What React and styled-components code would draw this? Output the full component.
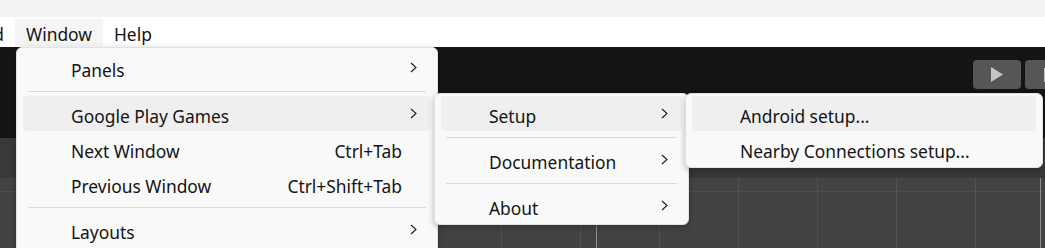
import React from "react";
import styled, { createGlobalStyle } from "styled-components";

const GlobalStyle = createGlobalStyle`
  html, body {
    margin: 0;
    padding: 0;
    background: #f3f3f3;
    overflow: hidden;
  }
  body {
    font-family: "Noto Sans", "Open Sans", sans-serif;
    font-size: 17.4px;
    color: #141414;
  }
`;

const Page = styled.div`
  position: relative;
  width: 1045px;
  height: 248px;
  overflow: hidden;
  display: flex;
  flex-direction: column;
`;

const TitleStrip = styled.div`
  height: 17px;
  background: #f3f3f3;
`;

const MenuBar = styled.div`
  height: 30px;
  background: #ffffff;
  display: flex;
  align-items: flex-start;
  padding-top: 2px;
  box-sizing: border-box;
`;

const LeadingClip = styled.div`
  width: 15px;
  display: flex;
  justify-content: flex-end;
  overflow: hidden;
`;

const BarItem = styled.div`
  height: 27px;
  line-height: 30px;
  padding: 0 11px;
  white-space: nowrap;
  flex-shrink: 0;
  background: ${(p) => (p.open ? "#f5f5f5" : "transparent")};
`;

const Workspace = styled.div`
  flex: 1;
  display: flex;
  flex-direction: column;
`;

const PlayBar = styled.div`
  height: 91px;
  background: #141414;
  display: flex;
  justify-content: flex-end;
  align-items: flex-start;
  padding-top: 13px;
  box-sizing: border-box;
`;

const PlayGroup = styled.div`
  display: flex;
  gap: 4px;
  margin-right: -80px;
`;

const PlayButton = styled.div`
  width: 48px;
  height: 29px;
  border-radius: 4px;
  background: #565656;
  display: flex;
  align-items: center;
  justify-content: center;
`;

const SceneToolbar = styled.div`
  height: 40px;
  background: #393939;
`;

const SceneView = styled.div`
  flex: 1;
  background-color: #434343;
  background-image:
    linear-gradient(#8c8c8c, #8c8c8c),
    linear-gradient(#8c8c8c, #8c8c8c),
    linear-gradient(to right, #525252 1px, transparent 1px),
    linear-gradient(to bottom, #4d4d4d 1px, transparent 1px);
  background-size: 1px 100%, 1px 100%, 79px 100%, 100% 79px;
  background-position: 596px 0, 1040px 0, 27px 0, 0 13px;
  background-repeat: no-repeat, no-repeat, repeat-x, repeat-y;
`;

const Menu = styled.div`
  position: absolute;
  left: ${(p) => p.left}px;
  top: ${(p) => p.top}px;
  width: ${(p) => p.width}px;
  box-sizing: border-box;
  background: #f9f9f9;
  border: 1px solid #e2e2e2;
  border-radius: 6px;
  padding: 2px 0 1px;
  box-shadow: 0 2px 6px rgba(0, 0, 0, 0.28);
  z-index: ${(p) => p.layer};
`;

const Row = styled.div`
  height: 35px;
  margin: 0 ${(p) => p.inset}px;
  padding: 0 14px 0 48px;
  border-radius: 4px;
  display: grid;
  grid-template-columns: 1fr auto 15px;
  align-items: center;
  background: ${(p) => (p.active ? "#efefef" : "transparent")};
  white-space: nowrap;
`;

const Label = styled.span`
  line-height: 30px;
  padding-top: 5px;
`;

const Shortcut = styled.span`
  line-height: 30px;
  padding-top: 5px;
  text-align: right;
`;

const ArrowSlot = styled.span`
  display: flex;
  justify-content: flex-end;
  align-items: center;
`;

const Separator = styled.div`
  height: 1px;
  background: #dadada;
  margin: 6px 11px 4px;
`;

const Chevron = () => (
  <svg width="7" height="11" viewBox="0 0 7 11">
    <polyline
      points="1,1 6,5.5 1,10"
      fill="none"
      stroke="#1a1a1a"
      strokeWidth="1.1"
    />
  </svg>
);

const windowMenu = [
  { label: "Panels", sub: true },
  { sep: true },
  { label: "Google Play Games", sub: true, active: true },
  { label: "Next Window", keys: "Ctrl+Tab" },
  { label: "Previous Window", keys: "Ctrl+Shift+Tab" },
  { sep: true },
  { label: "Layouts", sub: true },
  { label: "Search", sub: true },
  { sep: true },
  { label: "Asset Store" },
];

const playGamesMenu = [
  { label: "Setup", sub: true, active: true },
  { sep: true },
  { label: "Documentation", sub: true },
  { sep: true },
  { label: "About", sub: true },
];

const setupMenu = [
  { label: "Android setup...", active: true },
  { label: "Nearby Connections setup..." },
];

const MenuItems = ({ items, inset }) =>
  items.map((item, i) =>
    item.sep ? (
      <Separator key={i} />
    ) : (
      <Row key={i} inset={inset} active={item.active}>
        <Label>{item.label}</Label>
        <Shortcut>{item.keys}</Shortcut>
        <ArrowSlot>{item.sub && <Chevron />}</ArrowSlot>
      </Row>
    )
  );

const App = () => {
  return (
    <Page>
      <GlobalStyle />
      <TitleStrip />
      <MenuBar>
        <LeadingClip>
          <BarItem>Build</BarItem>
        </LeadingClip>
        <BarItem open>Window</BarItem>
        <BarItem>Help</BarItem>
      </MenuBar>
      <Workspace>
        <PlayBar>
          <PlayGroup>
            <PlayButton>
              <svg width="12" height="15" viewBox="0 0 12 15">
                <polygon points="0,0 12,7.5 0,15" fill="#c4c4c4" />
              </svg>
            </PlayButton>
            <PlayButton>
              <svg width="11" height="14" viewBox="0 0 11 14">
                <rect x="0" y="0" width="3" height="14" fill="#c4c4c4" />
                <rect x="8" y="0" width="3" height="14" fill="#c4c4c4" />
              </svg>
            </PlayButton>
            <PlayButton />
          </PlayGroup>
        </PlayBar>
        <SceneToolbar />
        <SceneView />
      </Workspace>

      <Menu left={16} top={47} width={422} layer={1}>
        <MenuItems items={windowMenu} inset={6} />
      </Menu>
      <Menu left={434} top={93} width={255} layer={2}>
        <MenuItems items={playGamesMenu} inset={6} />
      </Menu>
      <Menu left={685} top={93} width={358} layer={3}>
        <MenuItems items={setupMenu} inset={6} />
      </Menu>
    </Page>
  );
};

export default App;
